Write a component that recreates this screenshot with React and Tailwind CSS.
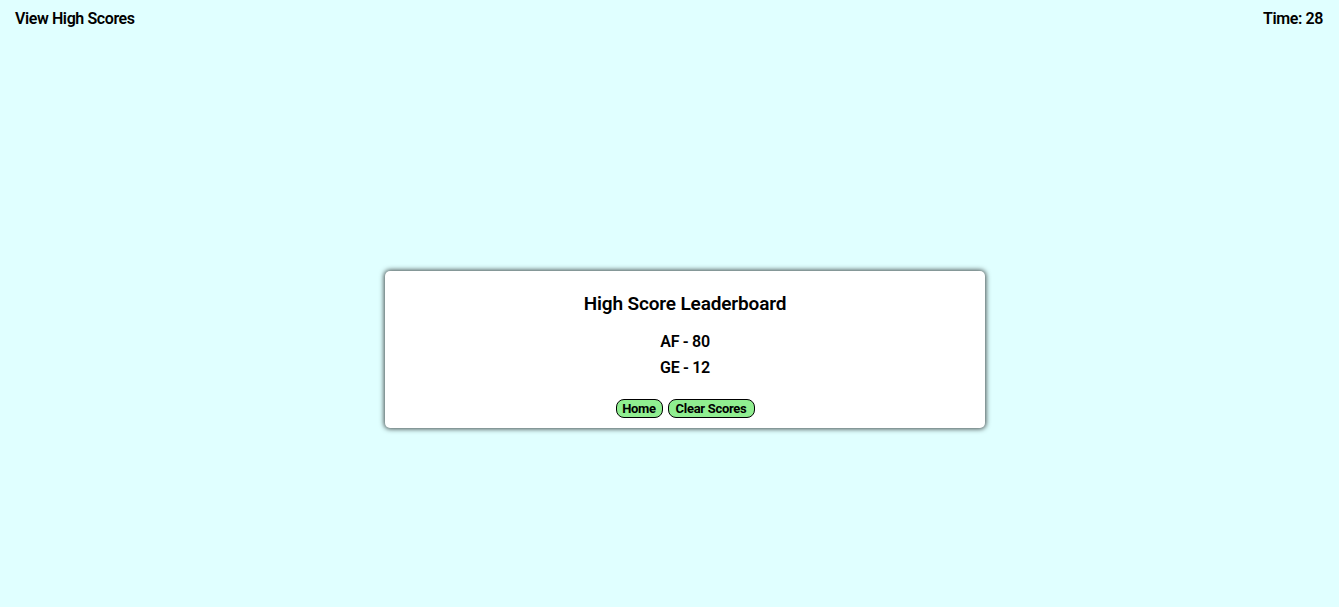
export default function App() {
  const font = { fontFamily: 'Roboto, "Liberation Sans", sans-serif' };
  return (
    <div className="w-[1339px] h-[607px] bg-[#e0ffff] text-black overflow-hidden" style={font}>
      <header className="flex justify-between items-center px-[15px] pt-[9px] h-[28px] text-[16px] font-semibold tracking-[-0.4px]">
        <span>View High Scores</span>
        <span className="pr-[1px]">Time: 28</span>
      </header>
      <div className="flex justify-center pl-[31px] mt-[243px]">
        <div className="w-[600px] h-[157px] bg-white rounded-[5px] shadow-[0_0_5px_1px_rgba(0,0,0,0.7)] flex flex-col items-center">
          <h1 className="mt-[21px] text-[19px] font-semibold tracking-[-0.15px] leading-[24px]">High Score Leaderboard</h1>
          <p className="mt-[16px] text-[16px] font-semibold tracking-[-0.3px] leading-[20px]">AF - 80</p>
          <p className="mt-[6px] text-[16px] font-semibold tracking-[-0.3px] leading-[20px]">GE - 12</p>
          <div className="mt-[21px] flex gap-[5px]">
            <button className="h-[19px] w-[47px] text-[13px] font-bold tracking-[-0.3px] leading-none bg-[#90ee90] border border-black rounded-[8px]">Home</button>
            <button className="h-[19px] w-[87px] text-[13px] font-bold tracking-[-0.3px] leading-none bg-[#90ee90] border border-black rounded-[8px]">Clear Scores</button>
          </div>
        </div>
      </div>
    </div>
  );
}
